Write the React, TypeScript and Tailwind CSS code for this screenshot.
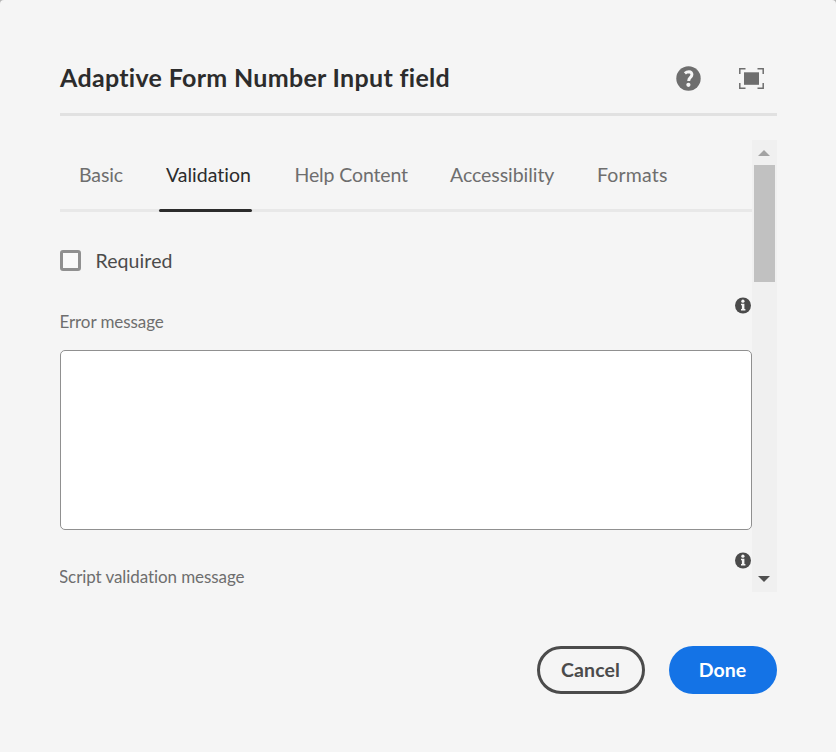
import React from 'react';

function HelpIcon() {
  return (
    <svg width="25" height="25" viewBox="0 0 25 25" aria-label="Help">
      <circle cx="12.5" cy="12.5" r="12.2" fill="#6e6e6e" />
      <path d="M8.9 7.4Q10.6 5.8 12.9 5.8Q16 5.9 15.9 8.7Q15.8 10.3 14.2 11.6Q12.7 12.8 12.7 14.9" fill="none" stroke="#f5f5f5" strokeWidth="3" />
      <circle cx="12.4" cy="18.8" r="2.1" fill="#f5f5f5" />
    </svg>
  );
}

function FullScreenIcon() {
  return (
    <svg width="25" height="21" viewBox="0 0 25 21" aria-label="Full screen">
      <rect x="5" y="4.3" width="15" height="12.5" fill="#6e6e6e" />
      <path d="M.8 6V.8H6.5M18.5 .8H24.2V6M24.2 15V20.2H18.5M6.5 20.2H.8V15" fill="none" stroke="#6e6e6e" strokeWidth="1.5" />
    </svg>
  );
}

function InfoIcon() {
  return (
    <svg className="-mt-px" width="16" height="17" viewBox="0 0 16 17" aria-label="Info">
      <circle cx="8" cy="8.5" r="8" fill="#4b4b4b" />
      <circle cx="7.9" cy="4.2" r="1.6" fill="#f5f5f5" />
      <path d="M6 6.7H9.4V11.9H10.4V13.5H6V11.9H6.9V8.2H6Z" fill="#f5f5f5" />
    </svg>
  );
}

const tabs = [
  { label: 'Basic', box: 'w-[88px]', text: 'pl-[8px] -tracking-[0.1px]' },
  { label: 'Validation', box: 'w-[127px]', text: 'pl-[7px]', active: true },
  { label: 'Help Content', box: 'w-[156px]', text: 'pl-[8.5px] -tracking-[0.13px]' },
  { label: 'Accessibility', box: 'w-[147px]', text: 'pl-[8px] -tracking-[0.05px]' },
  { label: 'Formats', box: 'w-[90px]', text: 'pl-[8px] tracking-[0.18px]' },
];

export default function App() {
  return (
    <div className="bg-[#b4b4b4] font-['Lato','Open_Sans',sans-serif] [font-variant-ligatures:none]">
      <div className="flex h-[752px] w-[836px] flex-col rounded-t-[4px] bg-[#f5f5f5] pl-[60px] pr-[59px]">
        <header className="flex h-[116px] items-center justify-between border-b-[3px] border-[#e1e1e1] pt-[43px] pr-[13px]">
          <h1 className="-mt-[2px] text-[25px] leading-[30px] font-bold tracking-[0.31px] whitespace-nowrap text-[#2c2c2c]">
            Adaptive Form Number Input field
          </h1>
          <div className="flex items-center gap-[38px]">
            <HelpIcon />
            <FullScreenIcon />
          </div>
        </header>

        <div className="mt-6 flex h-[452px]">
          <main className="w-[692px] overflow-hidden">
            <nav className="flex h-[72px] border-b-[3px] border-[#e8e8e8] pl-[11px]">
              {tabs.map((t) => (
                <div key={t.label} className={`${t.box} h-[72px] shrink-0`}>
                  <div className={`flex h-[72px] flex-col justify-between pt-[22px] ${t.active ? 'w-[93px] text-[#2c2c2c]' : 'text-[#6e6e6e]'}`}>
                    <span className={`text-[19.5px] leading-[26px] whitespace-nowrap ${t.text}`}>{t.label}</span>
                    {t.active && <span className="h-[3px] w-full rounded-full bg-[#2c2c2c]" />}
                  </div>
                </div>
              ))}
            </nav>

            <label className="mt-[36px] flex h-[26px] items-start">
              <span className="mt-[2px] h-[21px] w-[21px] rounded-[3px] border-[3px] border-[#909090] bg-[#fafafa]" />
              <span className="ml-[14.5px] text-[19.5px] leading-[26px] tracking-[0.1px] text-[#4b4b4b]">Required</span>
            </label>

            <div className="mt-[24px] flex h-[52px] items-start justify-between pr-px">
              <span className="mt-[12px] -ml-[0.5px] text-[17px] leading-[24px] -tracking-[0.08px] text-[#6e6e6e]">Error message</span>
              <InfoIcon />
            </div>
            <textarea className="block h-[180px] w-full resize-none rounded-[5px] border border-[#909090] bg-white outline-none" />

            <div className="mt-[23px] flex h-[39px] items-start justify-between pr-px">
              <span className="mt-[12px] -ml-[1px] text-[17px] leading-[24px] -tracking-[0.08px] text-[#6e6e6e]">Script validation message</span>
              <InfoIcon />
            </div>
          </main>

          <div className="flex w-[25px] flex-col items-center bg-[#f0f0f0]">
            <svg className="mt-[10px] mr-px shrink-0" width="12" height="6" viewBox="0 0 12 6"><path d="M0 6L6 0L12 6Z" fill="#a3a3a3" /></svg>
            <div className="mt-[9px] h-[117px] w-[21px] shrink-0 bg-[#c1c1c1]" />
            <svg className="mt-auto mr-px mb-[10px] shrink-0" width="12" height="6" viewBox="0 0 12 6"><path d="M0 0H12L6 6Z" fill="#505050" /></svg>
          </div>
        </div>

        <footer className="mt-[54px] flex justify-end gap-6">
          <button className="h-12 w-[108px] rounded-full border-[3px] border-[#4b4b4b] pr-[1px] pb-[1px] text-[19.5px] leading-[26px] font-bold tracking-[0.1px] text-[#4b4b4b]">Cancel</button>
          <button className="h-12 w-[108px] rounded-full bg-[#1473e6] pr-[1px] pb-[1px] text-[19.5px] leading-[26px] font-bold text-white">Done</button>
        </footer>
      </div>
    </div>
  );
}
